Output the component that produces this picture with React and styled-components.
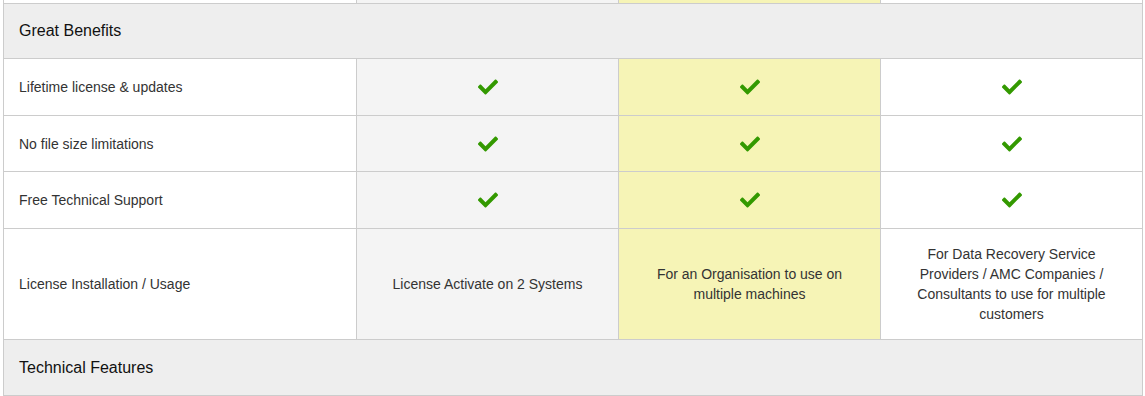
import styled, { createGlobalStyle } from 'styled-components';
import { FaCheck } from 'react-icons/fa';

const GlobalStyle = createGlobalStyle`
   body {
      margin: 0;
      background: #fff;
      font-family: "Liberation Sans", Arial, sans-serif;
   }
`;

const benefits = [
   { label: 'Lifetime license & updates', h: 57 },
   { label: 'No file size limitations', h: 56 },
   { label: 'Free Technical Support', h: 57 },
];

function App() {
   return (
      <>
         <GlobalStyle />
         <Wrapper>
            <Table>
               <colgroup>
                  <col style={{ width: 353 }} />
                  <col style={{ width: 262 }} />
                  <col style={{ width: 262 }} />
                  <col style={{ width: 262 }} />
               </colgroup>
               <tbody>
                  <Row $h={33}>
                     <LabelCell />
                     <Cell $tone="grey" />
                     <Cell $tone="yellow" />
                     <Cell />
                  </Row>
                  <Row $h={55}>
                     <SectionCell colSpan={4}>Great Benefits</SectionCell>
                  </Row>
                  {benefits.map((b) => (
                     <Row key={b.label} $h={b.h}>
                        <LabelCell>{b.label}</LabelCell>
                        <Cell $tone="grey"><Check size={20} /></Cell>
                        <Cell $tone="yellow"><Check size={20} /></Cell>
                        <Cell><Check size={20} /></Cell>
                     </Row>
                  ))}
                  <Row $h={111}>
                     <LabelCell>License Installation / Usage</LabelCell>
                     <Cell $tone="grey">License Activate on 2 Systems</Cell>
                     <Cell $tone="yellow">For an Organisation to use on multiple machines</Cell>
                     <Cell>For Data Recovery Service Providers / AMC Companies / Consultants to use for multiple customers</Cell>
                  </Row>
                  <Row $h={56}>
                     <SectionCell colSpan={4}>Technical Features</SectionCell>
                  </Row>
               </tbody>
            </Table>
         </Wrapper>
      </>
   );
}

export default App;

const Wrapper = styled.div`
   padding-left: 3px;
   margin-top: -30px;
`;

const Table = styled.table`
   width: 1140px;
   border-collapse: collapse;
   table-layout: fixed;
`;

const Row = styled.tr`
   height: ${(p) => p.$h}px;
`;

const Cell = styled.td`
   border: 1px solid #cccccc;
   padding: 0 25px;
   text-align: center;
   vertical-align: middle;
   font-size: 14px;
   line-height: 20px;
   color: #333;
   background: ${(p) =>
      p.$tone === 'grey' ? '#f4f4f4' : p.$tone === 'yellow' ? '#f6f4b6' : '#ffffff'};
`;

const LabelCell = styled(Cell)`
   text-align: left;
   padding: 0 15px;
`;

const SectionCell = styled.td`
   border: 1px solid #cccccc;
   background: #eeeeee;
   padding: 0 15px;
   font-size: 16px;
   color: #111;
   vertical-align: middle;
`;

const Check = styled(FaCheck)`
   color: #339900;
   display: block;
   margin: 0 auto;
`;
